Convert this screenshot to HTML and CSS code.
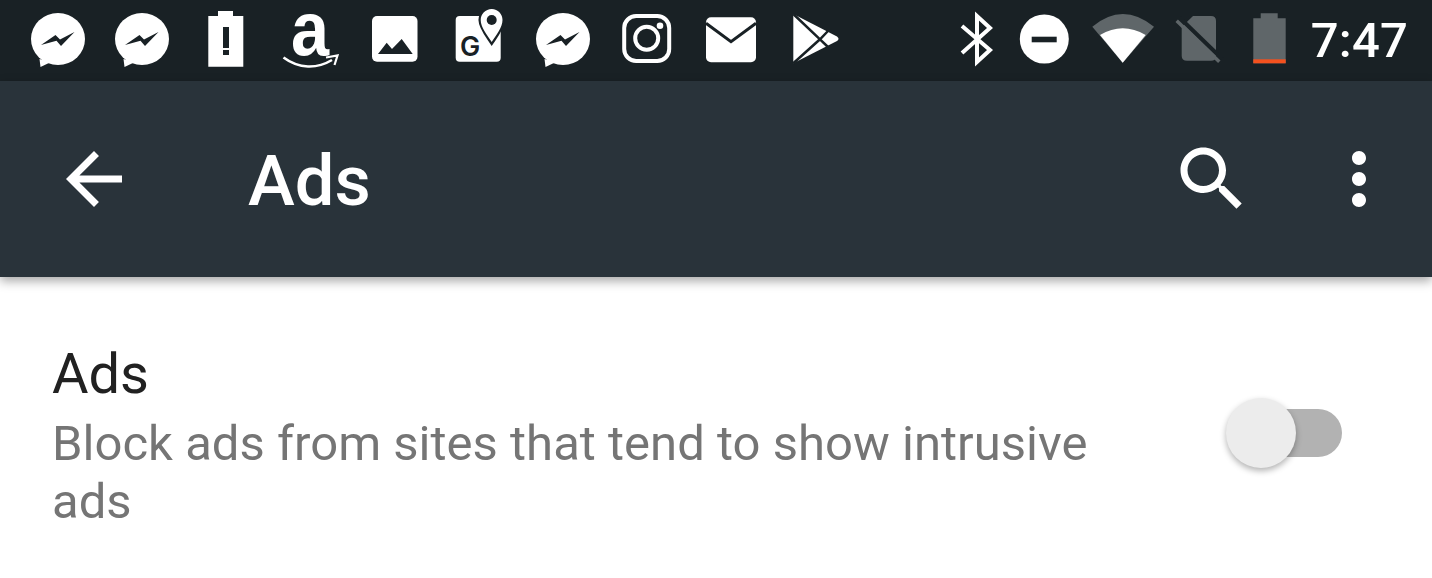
FILE: index.html
```html
<!DOCTYPE html>
<html lang="en">

<head>
    <meta charset="UTF-8">
    <title>Ads</title>
    <link rel="stylesheet" href="styles.css">
</head>

<body>
    <svg class="defs" width="0" height="0">
        <symbol id="messenger" viewBox="0 0 64 64" overflow="visible">
            <ellipse cx="32" cy="30" rx="27" ry="26" fill="#fff" />
            <path d="M13.5 50 14.5 58 25 53z" fill="#fff" />
            <path d="M15 36 29.5 26 34 30.5 48.5 23 35 37 30.5 31.7z" fill="#192125" />
        </symbol>
    </svg>

    <div class="status-bar">
        <div class="notifications">
            <div class="slot"><svg class="icon"><use href="#messenger" /></svg></div>
            <div class="slot"><svg class="icon"><use href="#messenger" /></svg></div>
            <div class="slot">
                <svg class="icon" viewBox="0 0 64 64">
                    <path d="M24 2h15v5h10.3v50.7h-35V7H24z" fill="#fff" />
                    <path d="M29 18h6v21h-6zM29 41h6v5h-6z" fill="#192125" />
                </svg>
            </div>
            <div class="slot">
                <svg class="icon" viewBox="0 0 64 64">
                    <text class="amazon-a" transform="translate(31 46) scale(.9 1)" text-anchor="middle">a</text>
                    <path d="M4.500 48.500C20 60 38 60 53 51" fill="none" stroke="#fff" stroke-width="2.600" />
                    <path d="M47 48.500 58.500 46.500 55.500 56" fill="none" stroke="#fff" stroke-width="2.200" />
                </svg>
            </div>
            <div class="slot">
                <svg class="icon" viewBox="0 0 64 64">
                    <rect x="9" y="7" width="45.500" height="45.700" rx="5" fill="#fff" />
                    <path d="M15 45 23.700 33.700 29 40 38.700 30 49.700 45z" fill="#192125" />
                </svg>
            </div>
            <div class="slot">
                <svg class="icon" viewBox="0 0 64 64">
                    <rect x="8.700" y="7" width="45" height="45.700" rx="4" fill="#fff" />
                    <path d="M44.700 0C38.500 0 33.700 5 33.700 11 33.700 18 40 26 44.700 33 49.500 26 55.500 18 55.500 11 55.500 5 51 0 44.700 0z" fill="#fff" stroke="#192125" stroke-width="4.500" paint-order="stroke" />
                    <circle cx="44.700" cy="11" r="5" fill="#192125" />
                    <text class="maps-g" x="13" y="47">G</text>
                </svg>
            </div>
            <div class="slot"><svg class="icon"><use href="#messenger" /></svg></div>
            <div class="slot">
                <svg class="icon" viewBox="0 0 64 64">
                    <rect x="9.200" y="7" width="45" height="45" rx="12" fill="none" stroke="#fff" stroke-width="4" />
                    <circle cx="31.700" cy="29.300" r="11.500" fill="none" stroke="#fff" stroke-width="4" />
                    <circle cx="45" cy="16.700" r="3.300" fill="#fff" />
                </svg>
            </div>
            <div class="slot">
                <svg class="icon" viewBox="0 0 64 64">
                    <rect x="6" y="8.300" width="50" height="45" rx="5" fill="#fff" />
                    <path d="M6 14.300 31 32.700 56 14.300" fill="none" stroke="#192125" stroke-width="3" />
                </svg>
            </div>
            <div class="slot">
                <svg class="icon" viewBox="0 0 64 64">
                    <path d="M9.300 5 53 27.500Q56 29.800 53 32L9.300 54.300z" fill="#fff" />
                    <path d="M9.300 5 36 30.300 44 38M9.300 54.300 36 30.300 44 22" fill="none" stroke="#192125" stroke-width="2.500" />
                </svg>
            </div>
        </div>

        <div class="system-icons">
            <svg class="bluetooth" viewBox="0 0 40 64">
                <path d="M6 17 34 41 21 53V7L34 19 6 44" fill="none" stroke="#fff" stroke-width="4" />
            </svg>
            <svg class="dnd" viewBox="0 0 52 64">
                <circle cx="26.300" cy="30" r="24.500" fill="#fff" />
                <rect x="13.700" y="27.700" width="25" height="5.600" fill="#192125" />
            </svg>
            <svg class="wifi" viewBox="0 0 64 64">
                <path d="M1.300 17.700Q31.700-7.700 63 17.700L31.700 53.700z" fill="#5f6669" />
                <path d="M9 26Q31.700 12.600 54.700 26L31.700 53.700z" fill="#fff" />
            </svg>
            <svg class="sim" viewBox="0 0 48 64">
                <path d="M17 7H35Q40 7 40 12V47Q40 51.700 35 51.700H11Q5.700 51.700 5.700 47V18z" fill="#5f6669" />
                <path d="M3.700 8.700 46 49.700" stroke="#192125" stroke-width="4" />
                <path d="M.7 11.700 43.300 52.700" stroke="#5f6669" stroke-width="3.500" />
            </svg>
            <svg class="battery" viewBox="0 0 36 64">
                <path d="M9.700 4.300H26.700V9.300H34.700V54.300H2.300V9.300H9.700z" fill="#5f6669" />
                <rect x="2.300" y="50.300" width="32.400" height="4" fill="#f4511e" />
            </svg>
            <span class="clock">7:47</span>
        </div>
    </div>

    <div class="toolbar">
        <svg class="action" viewBox="0 0 24 24">
            <path d="M20 11H7.830l5.590-5.590L12 4l-8 8 8 8 1.410-1.410L7.830 13H20v-2z" />
        </svg>
        <h1>Ads</h1>
        <svg class="action" viewBox="0 0 24 24">
            <path d="M15.500 14h-.790l-.280-.270C15.410 12.590 16 11.110 16 9.500 16 5.910 13.090 3 9.500 3S3 5.910 3 9.500 5.910 16 9.500 16c1.610 0 3.090-.590 4.230-1.570l.270.280v.790l5 4.990L20.490 19l-4.990-5zm-6 0C7.010 14 5 11.990 5 9.500S7.010 5 9.500 5 14 7.010 14 9.500 11.990 14 9.500 14z" />
        </svg>
        <svg class="action more" viewBox="0 0 24 24">
            <path d="M12 8c1.100 0 2-.900 2-2s-.900-2-2-2-2 .900-2 2 .900 2 2 2zm0 2c-1.100 0-2 .900-2 2s.900 2 2 2 2-.900 2-2-.900-2-2-2zm0 6c-1.100 0-2 .900-2 2s.900 2 2 2 2-.900 2-2-.900-2-2-2z" />
        </svg>
    </div>

    <div class="setting">
        <div class="setting-text">
            <div class="setting-title">Ads</div>
            <div class="setting-summary">Block ads from sites that tend to show intrusive ads</div>
        </div>
        <div class="switch">
            <div class="switch-thumb"></div>
        </div>
    </div>
</body>

</html>
```

FILE: styles.css
```css
body {
    margin: 0;
    height: 578px;
    overflow: hidden;
    background-color: #fff;
    font-family: "Roboto", sans-serif;
}

.defs {
    display: block;
}

.status-bar {
    display: flex;
    align-items: center;
    height: 81px;
    padding-left: 16px;
    background-color: #192125;
    color: #fff;
}

.notifications {
    display: flex;
}

.slot {
    display: flex;
    justify-content: center;
    width: 84.200px;
}

.icon {
    width: 64px;
    height: 64px;
    overflow: visible;
}

.amazon-a {
    font-family: "Liberation Sans", sans-serif;
    font-size: 76px;
    font-weight: 700;
    fill: #fff;
}

.maps-g {
    font-family: "Inter", sans-serif;
    font-size: 27px;
    font-weight: 600;
    fill: #192125;
}

.system-icons {
    display: flex;
    align-items: center;
    margin-left: auto;
    padding-right: 24px;
}

.system-icons svg {
    height: 64px;
    overflow: visible;
}

.bluetooth {
    width: 40px;
}

.dnd {
    width: 52px;
    margin-left: 22px;
}

.wifi {
    width: 64px;
    margin-left: 21px;
}

.sim {
    width: 48px;
    margin-left: 21px;
}

.battery {
    width: 36px;
    margin-left: 27px;
}

.clock {
    margin-left: 24px;
    font-size: 49px;
    font-weight: 500;
    letter-spacing: 0.2px;
    line-height: 64px;
}

.toolbar {
    position: relative;
    display: flex;
    align-items: center;
    height: 196px;
    padding: 0 31px 0 52px;
    background-color: #29333a;
    box-shadow: 0 4px 10px rgba(0, 0, 0, 0.35);
}

.toolbar h1 {
    flex: 1;
    margin: 3px 0 0 112px;
    color: #fff;
    font-size: 70.500px;
    font-weight: 500;
}

.action {
    width: 84px;
    height: 84px;
    fill: #fff;
}

.more {
    margin-left: 63px;
}

.setting {
    display: flex;
    align-items: center;
    padding: 64px 90px 0 52px;
}

.setting-text {
    flex: 1;
    padding-right: 84px;
}

.setting-title {
    color: #212121;
    font-size: 56px;
    line-height: 66px;
}

.setting-summary {
    margin-top: 8px;
    color: #757575;
    font-size: 49px;
    letter-spacing: 0.02px;
    line-height: 58px;
}

.switch {
    position: relative;
    width: 102px;
    height: 48px;
    border-radius: 24px;
    background-color: #b2b2b2;
    margin-bottom: 7px;
}

.switch-thumb {
    position: absolute;
    left: -14px;
    top: -11px;
    width: 70px;
    height: 70px;
    border-radius: 50%;
    background-color: #ececec;
    box-shadow: 0 3px 6px rgba(0, 0, 0, 0.3);
}
```
